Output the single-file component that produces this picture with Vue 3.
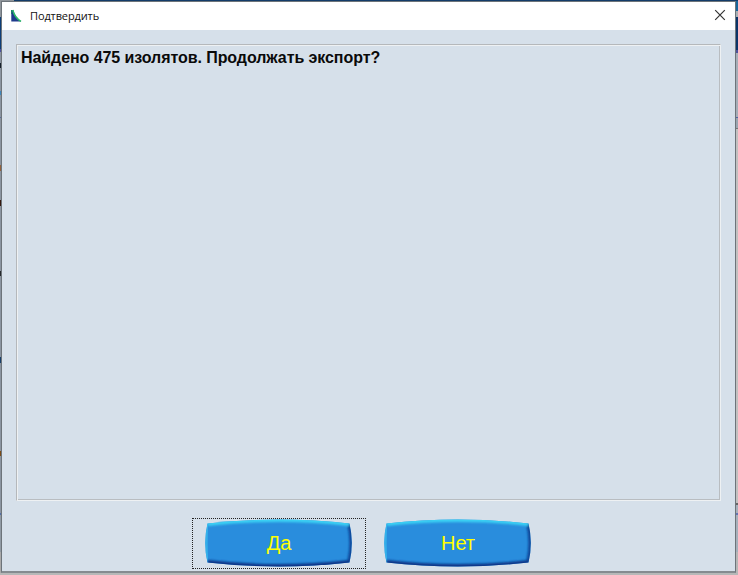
<script setup>
const buttons = [
  { label: 'Да', focused: true },
  { label: 'Нет', focused: false },
]
</script>

<template>
  <div class="desktop">
    <div class="edge left"></div>
    <section class="dialog" role="dialog">
      <header class="titlebar">
        <svg class="logo" width="12" height="14" viewBox="0 0 12 14">
          <path d="M0.3 1L2.4 1Q4.2 9 10.3 12.6L0.3 12.6Z" fill="#1f3a8c" />
          <path d="M1.7 1Q3.6 8.6 10 12.3" fill="none" stroke="#2cba68" stroke-width="1.5" />
          <path d="M0.5 1V5" fill="none" stroke="#1c7a6c" stroke-width="1" />
        </svg>
        <h1 class="title">Подтвердить</h1>
        <button class="close" aria-label="Закрыть">
          <svg width="12" height="12" viewBox="0 0 12 12">
            <path d="M1.2 1.2L10.8 10.8M10.8 1.2L1.2 10.8" stroke="#333" stroke-width="1.2" fill="none" />
          </svg>
        </button>
      </header>
      <main class="body">
        <div class="message"><p>Найдено 475 изолятов. Продолжать экспорт?</p></div>
        <footer class="actions">
          <button v-for="(b, i) in buttons" :key="i" class="action" :class="{ focused: b.focused }">
            <svg class="face" width="148" height="48" viewBox="0 0 148 48">
              <defs>
                <clipPath :id="'clip' + i">
                  <path d="M2.5 4.5Q74 -3.5 144.5 4.5Q149 24 144.5 43.5Q74 51.5 2.5 43.5Q-2 24 2.5 4.5Z" />
                </clipPath>
                <filter :id="'soft' + i" x="-10%" y="-20%" width="120%" height="140%">
                  <feGaussianBlur stdDeviation="0.9" />
                </filter>
              </defs>
              <g :clip-path="`url(#clip${i})`">
                <rect width="148" height="48" fill="#298ddd" />
                <g fill="none" stroke-width="4.8">
                  <path d="M2.5 43.5Q-2 24 2.5 4.5" stroke="#36b4eb" :filter="`url(#soft${i})`" />
                  <g :filter="`url(#soft${i})`">
                    <path d="M144.5 4.5Q149 24 144.5 43.5" stroke="#0f4699" />
                    <path d="M2.5 43.5Q74 51.5 144.5 43.5" stroke="#0b3486" />
                    <path d="M2.5 4.5Q74 -3.5 144.5 4.5" stroke="#3ad2f4" />
                  </g>
                </g>
              </g>
            </svg>
            <span class="label">{{ b.label }}</span>
          </button>
        </footer>
      </main>
    </section>
    <div class="edge right"></div>
  </div>
</template>

<style>
body { margin: 0; overflow: hidden; }
</style>

<style scoped>
.desktop {
  display: grid;
  grid-template-columns: 1px 735px 2px;
  box-sizing: border-box;
  width: 738px;
  height: 575px;
  padding: 1px 0 2px;
  background: linear-gradient(90deg, #8f959b 0 14px, #123b69 14px) 0 0 / 100% 1px no-repeat, #b6b8b8;
  font-family: "Liberation Sans", Arial, sans-serif;
}
.left {
  background: linear-gradient(#8f959b 0 16px, #0d3e78 16px 48px, #4a50a0 48px 51px, #8b95a1 51px 62px,
    #15202c 62px 67px, #8b95a1 67px 90px, #3d87bd 90px 94px, #8b95a1 94px 116px, #596c9c 116px 117px,
    #8b95a1 117px 164px, #91623e 164px 170px, #8b95a1 170px 199px, #35190f 199px 205px,
    #8b95a1 205px 270px, #25292c 270px 275px, #8b95a1 275px 356px, #183f6a 356px 362px,
    #8b95a1 362px 450px, #7b4b16 450px 455px, #8b95a1 455px 512px, #546fa7 512px 514px,
    #919ba5 514px 551px, #aaa 551px);
}
.right {
  background: linear-gradient(#17659a 0 10px, #a9b1b5 10px 16px, #0b3468 16px 49px, #4c519a 49px 52px,
    #a5adb7 52px 116px, #5564a0 116px 117px, #9ba5b0 117px 127px, #777 127px 128px,
    #c2c0c0 128px 502px, #666 502px 504px, #a6b0bb 504px 512px, #6476b2 512px 514px,
    #a6b0bb 514px 551px, #b6b6b6 551px);
}
.dialog {
  display: flex;
  flex-direction: column;
  box-sizing: border-box;
  border: 1px solid #6d747a;
  border-bottom: 2px solid #858b90;
  background: #d6e0ea;
}
.titlebar {
  display: flex;
  align-items: center;
  box-sizing: border-box;
  height: 28px;
  flex: none;
  padding: 0 0 2px 9px;
  background: #fff;
}
.logo { margin-top: 1px; }
.title {
  flex: 1;
  margin: 1px 0 0 7px;
  font: 400 11px/16px "Open Sans", "Noto Sans", sans-serif;
  letter-spacing: -0.12px;
  color: #111;
}
button { padding: 0; border: 0; background: none; }
.close { display: flex; margin-right: 9px; }
.body { display: flex; flex: 1; flex-direction: column; padding: 14px 14px 0; }
.message {
  box-sizing: border-box;
  height: 457px;
  border: 1px solid #b5b8bb;
  border-right-color: #eef1f3;
  border-bottom-color: #eef1f3;
  box-shadow: inset 1px 1px #eef1f3, inset -1px -1px #b9bdc1;
}
.message p {
  margin: 3px 0 0 4px;
  font-size: 16px;
  line-height: 19px;
  font-weight: 700;
  letter-spacing: -0.07px;
  color: #0a0a0a;
  white-space: nowrap;
}
.actions { display: flex; gap: 5px; padding: 17px 0 0 176px; }
.action {
  display: grid;
  justify-content: start;
  align-content: start;
  justify-items: center;
  box-sizing: border-box;
  width: 174px;
  height: 51px;
  padding-left: 12px;
  border: 1px solid transparent;
}
.action.focused { border: 1px dotted #222; }
.face, .label { grid-area: 1 / 1; }
.label {
  padding-top: 12px;
  font: 400 20px/24px "Liberation Sans", Arial, sans-serif;
  color: #ff0;
}
</style>
